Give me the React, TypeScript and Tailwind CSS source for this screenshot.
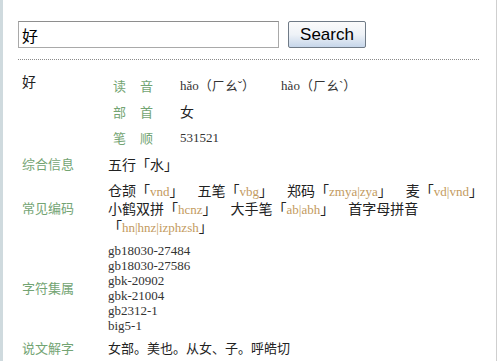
import React from "react";

const serif = "font-['Liberation_Serif','Noto_Sans_CJK_SC',serif]";
const cjk = "font-['Noto_Sans_CJK_SC','Liberation_Sans',sans-serif]";

const Code: React.FC<{ children: React.ReactNode }> = ({ children }) => (
  <span className={`${serif} text-[13px] leading-none text-[#c39a5e]`}>{children}</span>
);

const Label: React.FC<{ children: React.ReactNode }> = ({ children }) => (
  <div className={`${cjk} text-[13px] text-[#73a473]`}>{children}</div>
);

const Gap = () => <span className="inline-block w-[14px]" />;

const App: React.FC = () => {
  return (
    <div className="w-[498px] h-[361px] overflow-hidden bg-white">
      <div className="w-[497px] h-[361px] border-l-[3px] border-r border-l-[#cfdade] border-r-[#cfcfcf] pl-[15px]">
        {/* Search bar */}
        <div className="flex items-center pt-[20px]">
          <div className="w-[261px] h-[27px] mt-[1px] border border-[#a9a9a9] border-t-[#8e8e8e] flex items-center pl-[3px]">
            <span className={`${cjk} text-[16px] text-black leading-none`}>好</span>
          </div>
          <button className="ml-[9px] w-[78px] h-[27px] border border-[#6f7a86] rounded-[2px] bg-gradient-to-b from-[#fbfbfb] via-[#eef2f7] to-[#c6d6ea] font-['Liberation_Sans',sans-serif] text-[17px] text-black">
            Search
          </button>
        </div>
        <div className="w-[461px] mt-[11px] border-t border-dotted border-[#8a8a8a]" />

        {/* Details */}
        <div className="grid grid-cols-[86px_1fr] pl-[4px] text-[#222]">
          <div className={`${cjk} text-[14px] pt-[11px]`}>好</div>
          <div className="pt-[13px]">
            {[
              ["读", "音"],
              ["部", "首"],
              ["笔", "顺"],
            ].map(([a, b], i) => (
              <div key={i} className="flex items-center h-[26px]">
                <div className="w-[72px] pl-[5px] flex gap-[14px]">
                  <Label>{a}</Label>
                  <Label>{b}</Label>
                </div>
                <div className={`${serif} text-[13px] text-[#333]`}>
                  {i === 0 && (
                    <span>
                      hǎo（ㄏㄠˇ）
                      <span className="inline-block w-[26px]" />
                      hào（ㄏㄠˋ）
                    </span>
                  )}
                  {i === 1 && <span className={`${cjk} text-[14px] text-[#222]`}>女</span>}
                  {i === 2 && <span>531521</span>}
                </div>
              </div>
            ))}
          </div>

          <div className="flex items-center h-[26px]">
            <Label>综合信息</Label>
          </div>
          <div className={`${cjk} text-[14px] flex items-center h-[26px]`}>五行「水」</div>

          <div className="flex items-center mt-[4px] h-[54px]">
            <Label>常见编码</Label>
          </div>
          <div className={`${cjk} text-[14px] mt-[4px] h-[54px]`}>
            <div className="h-[18px] leading-[18px] whitespace-nowrap">
              仓颉「<Code>vnd</Code>」<Gap />
              五笔「<Code>vbg</Code>」<Gap />
              郑码「<Code>zmya|zya</Code>」<Gap />
              麦「<Code>vd|vnd</Code>」
            </div>
            <div className="h-[18px] leading-[18px] whitespace-nowrap">
              小鹤双拼「<Code>hcnz</Code>」<Gap />
              大手笔「<Code>ab|abh</Code>」<Gap />
              首字母拼音
            </div>
            <div className="h-[18px] leading-[18px] whitespace-nowrap">
              「<Code>hn|hnz|izphzsh</Code>」
            </div>
          </div>

          <div className="flex items-center mt-[8px] h-[90px]">
            <Label>字符集属</Label>
          </div>
          <div className={`${serif} text-[13px] leading-[15px] mt-[8px] text-[#333]`}>
            <div>gb18030-27484</div>
            <div>gb18030-27586</div>
            <div>gbk-20902</div>
            <div>gbk-21004</div>
            <div>gb2312-1</div>
            <div>big5-1</div>
          </div>

          <div className="flex items-center mt-[6px] h-[18px]">
            <Label>说文解字</Label>
          </div>
          <div className={`${cjk} text-[13px] mt-[6px] h-[18px] flex items-center`}>
            女部。美也。从女、子。呼皓切
          </div>
        </div>
      </div>
    </div>
  );
};

export default App;
